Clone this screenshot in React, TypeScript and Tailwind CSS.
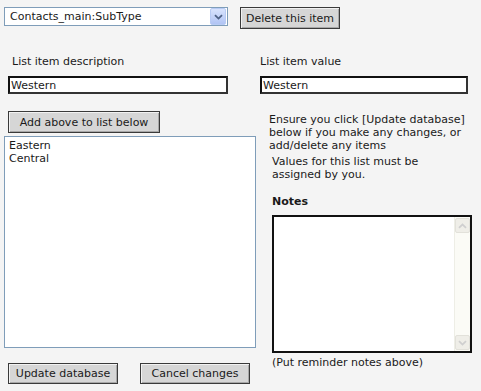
// List item editor panel (classic form look)

const FONT = "font-['DejaVu_Sans','Verdana',sans-serif]";

function Chevron({ up, color }: { up?: boolean; color: string }) {
  return (
    <svg width="9" height="6" viewBox="0 0 9 6" className={up ? "rotate-180" : ""}>
      <path d="M1 1.2 L4.5 4.6 L8 1.2" fill="none" stroke={color} strokeWidth="1.8" />
    </svg>
  );
}

function Button({ label, className }: { label: string; className: string }) {
  return (
    <div
      className={
        "flex items-center justify-center bg-[#d6d6d6] border border-[#3a3a3a] shadow-[inset_1px_1px_0_#f2f2f2,inset_-1px_-1px_0_#a8a8a8] " +
        className
      }
    >
      {label}
    </div>
  );
}

function TextBox({ value, className }: { value: string; className: string }) {
  return (
    <div
      className={
        "flex items-center bg-white border-2 border-[#111] border-r-[#333] border-b-[#333] pl-[1px] " +
        className
      }
    >
      {value}
    </div>
  );
}

export default function App() {
  return (
    <div className={"w-[481px] h-[391px] bg-[#f4f4f4] text-[11px] leading-[13px] text-[#1a1a1a] " + FONT}>
      {/* Top row: list picker + delete */}
      <div className="flex items-start pt-[7px] pl-[4px]">
        <div className="flex items-center justify-between w-[224px] h-[19px] bg-white border border-[#7f9db9] pl-[5px] pr-[1px]">
          <span>Contacts_main:SubType</span>
          <div className="flex items-center justify-center w-[16px] h-[17px] rounded-[2px] bg-[linear-gradient(#d8e3fd,#b1c4f4)] border border-[#b8cbf4]">
            <Chevron color="#4d6185" />
          </div>
        </div>
        <Button label="Delete this item" className="ml-[12px] w-[100px] h-[22px]" />
      </div>

      <div className="flex">
        {/* Left column */}
        <div className="w-[260px] flex flex-col">
          <div className="mt-[26px] pl-[12px]">List item description</div>
          <TextBox value="Western" className="mt-[8px] ml-[8px] w-[220px] h-[18px]" />
          <Button label="Add above to list below" className="mt-[17px] ml-[8px] w-[152px] h-[22px]" />
          <div className="mt-[3px] ml-[4px] w-[252px] h-[212px] bg-white border border-[#7f9db9] pt-[2px] pl-[4px]">
            <div>Eastern</div>
            <div>Central</div>
          </div>
          <div className="mt-[15px] ml-[8px] flex gap-[22px]">
            <Button label="Update database" className="w-[110px] h-[21px]" />
            <Button label="Cancel changes" className="w-[110px] h-[21px]" />
          </div>
        </div>

        {/* Right column */}
        <div className="w-[221px] flex flex-col">
          <div className="mt-[26px]">List item value</div>
          <TextBox value="Western" className="mt-[8px] w-[208px] h-[18px]" />
          <div className="mt-[19px] pl-[9px]">
            Ensure you click [Update database]
            <br />
            below if you make any changes, or
            <br />
            add/delete any items
          </div>
          <div className="mt-[3px] pl-[12px]">
            Values for this list must be
            <br />
            assigned by you.
          </div>
          <div className="mt-[14px] pl-[12px] font-bold">Notes</div>
          <div className="mt-[7px] ml-[12px] w-[200px] h-[138px] bg-white border-2 border-[#111] flex justify-end">
            <div className="w-[16px] h-full flex flex-col justify-between py-[1px] bg-[#fbfbf6] border-l border-[#eeeee6]">
              <div className="h-[15px] flex items-center justify-center bg-[#efeee8] border border-[#e2e1da] rounded-[2px]">
                <Chevron up color="#cfcfcf" />
              </div>
              <div className="h-[15px] flex items-center justify-center bg-[#efeee8] border border-[#e2e1da] rounded-[2px]">
                <Chevron color="#cfcfcf" />
              </div>
            </div>
          </div>
          <div className="mt-[3px] pl-[12px]">(Put reminder notes above)</div>
        </div>
      </div>
    </div>
  );
}
